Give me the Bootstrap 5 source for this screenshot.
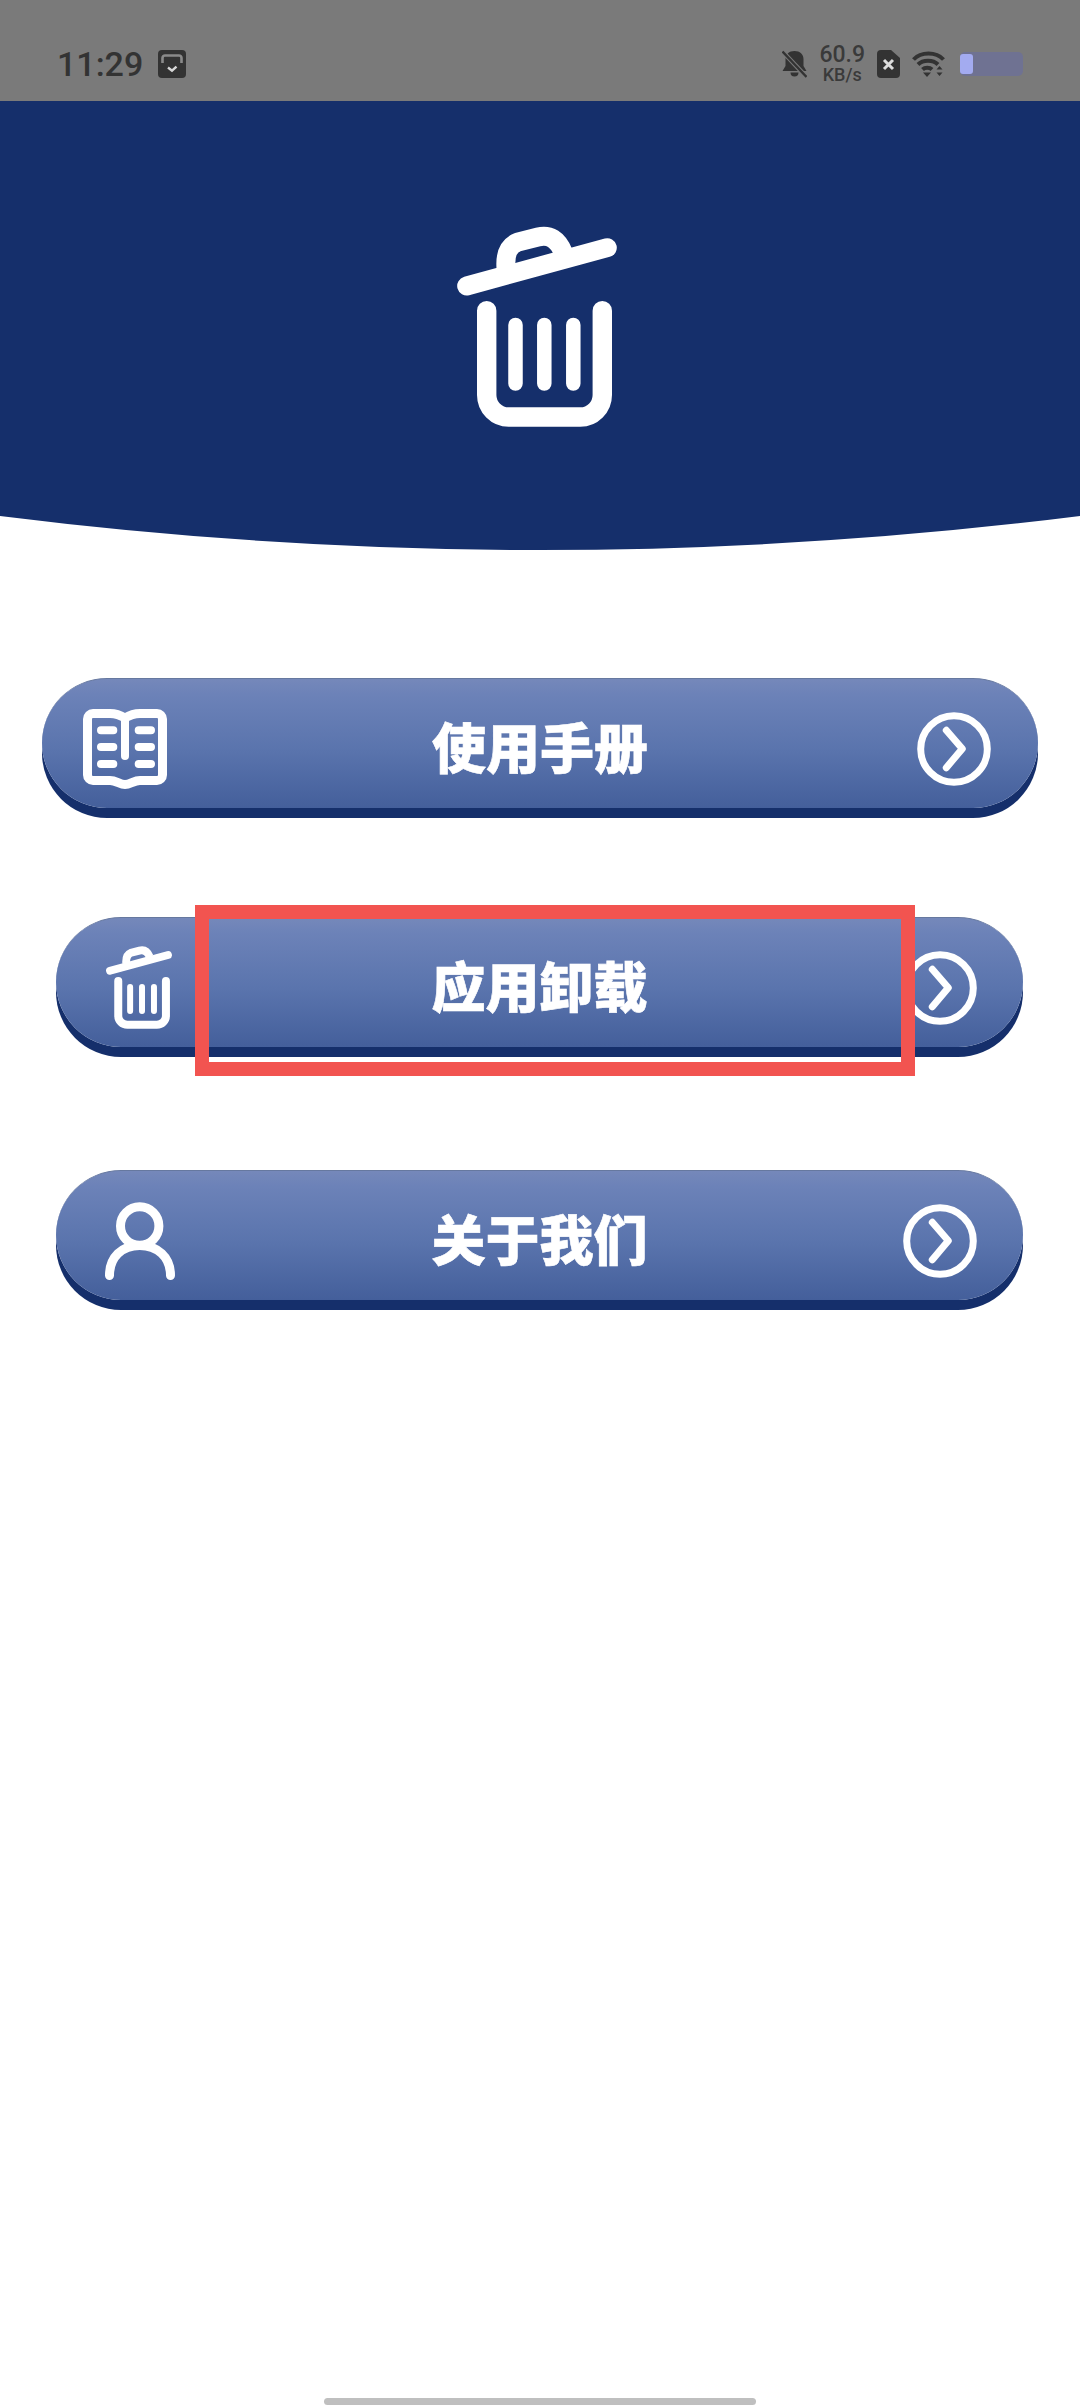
<!DOCTYPE html>
<html lang="zh-CN">
<head>
  <meta charset="UTF-8">
  <title>应用卸载</title>
  <link href="https://cdn.jsdelivr.net/npm/bootstrap@5.3.3/dist/css/bootstrap.min.css" rel="stylesheet">
  <style>
    body { font-family: "Noto Sans CJK SC", "Noto Sans", sans-serif; background: #fff; }
    .status-strip { height: 101px; padding: 26px 57px 0; background: #7a7a7a; color: #333; font-family: Roboto, "Noto Sans", sans-serif; }
    .clock { width: 85px; font-size: 34px; font-weight: 500; line-height: 1; white-space: nowrap; margin-right: 16px; }
    .speed { line-height: 1; text-align: center; font-weight: 500; color: #3a3a3a; }
    .speed-num { font-size: 23px; }
    .speed-unit { font-size: 18px; }
    .status-right { gap: 12px; }
    .wifi-icon { margin-right: 3px; }
    .hero { height: 415px; padding-top: 125px; background: #152f6b; }
    .hero-trash { width: 160px; height: 201px; margin-right: 6px; }
    .hero-curve { width: 100%; height: 34px; }
    .menu-list { padding-top: 128px; }
    .menu-row { height: 130px; padding-top: 10px; grid-template-columns: 1fr auto 1fr; font-size: 54px; font-weight: 900; line-height: 1; -webkit-text-stroke: .6px #fff; background: linear-gradient(#7588ba 0, #6c82b8 12%, #5a74ad 55%, #445f9b 100%); border-top: 1px solid #66789f; box-shadow: 0 10px 0 #152f6b; }
    .menu-label { padding-bottom: 5px; }
    .menu-first { margin: 0 42px 109px; padding-left: 47px; padding-right: 47px; }
    .menu-second { margin: 0 57px 123px 56px; padding-left: 46px; padding-right: 46px; }
    .menu-third { margin: 0 57px 0 56px; padding-left: 46px; padding-right: 46px; }
    .chevron-ring { width: 74px; height: 74px; justify-self: end; }
    .icon-book { width: 84px; height: 80px; margin-left: -6px; }
    .icon-trash { width: 66px; height: 83px; margin-left: 4px; }
    .icon-user { width: 70px; height: 78px; margin-left: 3px; }
    .red-frame { left: 195px; top: -12px; width: 720px; height: 171px; border: 14px solid #f25450; }
    .home-bar { width: 432px; height: 7px; margin-bottom: 3px; background: #bfbfbf; }
  </style>
</head>
<body>
  <svg width="0" height="0" class="position-absolute">
    <symbol id="trash" viewBox="37 26 160 201">
      <g fill="none" stroke="#fff" stroke-linecap="round">
        <path stroke-width="19.4" d="M66.7 110.7V195a22 22 0 0 0 22 22h71.6a22 22 0 0 0 22-22v-84.3"/>
        <path stroke-width="14.5" d="M95.5 125v58.5M124.3 125v58.5M153.3 125v58.5"/>
        <path stroke-width="19" d="M46.7 86 187.3 47.7"/>
        <path stroke-width="19" stroke-linecap="butt" d="M86 68C85 54 88 46 98 42l20-5c12-3 20 3 25 15"/>
      </g>
    </symbol>
    <symbol id="chevron" viewBox="0 0 74 74">
      <circle cx="37" cy="37" r="33.3" fill="none" stroke="#fff" stroke-width="7"/>
      <path d="M29.3 18.3 45.3 36.7 29.3 55.7" fill="none" stroke="#fff" stroke-width="7" stroke-linecap="round" stroke-linejoin="round"/>
    </symbol>
  </svg>

  <div class="d-flex flex-column min-vh-100">
    <!-- Barra de estado -->
    <div class="status-strip d-flex align-items-center justify-content-between">
      <div class="d-flex align-items-center">
        <span class="clock">11:29</span>
        <svg width="28" height="28" viewBox="0 0 28 28">
          <rect width="28" height="28" rx="4" fill="#333"/>
          <path d="M4.500 13V8A2.500 2.500 0 0 1 7 5.500h14A2.500 2.500 0 0 1 23.500 8v5" fill="none" stroke="#8a8a8a" stroke-width="2.600"/>
          <path d="M10 17.500l4 3.200 4.500-4" fill="none" stroke="#d8d8d8" stroke-width="2.400"/>
        </svg>
      </div>
      <div class="status-right d-flex align-items-center">
        <svg width="25" height="28" viewBox="0 0 25 28">
          <path d="M12.500 1c5.500 0 9 3.500 9 8v7l3 5H.5l3-5V9c0-4.500 3.500-8 9-8zM8.500 22.500h8a4 4 0 0 1-8 0z" fill="#333"/>
          <path d="M.5 1.500 24.500 27" stroke="#7a7a7a" stroke-width="4.500"/>
          <path d="M.5 1.500 24.500 27" stroke="#333" stroke-width="2.400"/>
        </svg>
        <div class="speed">
          <div class="speed-num">60.9</div>
          <div class="speed-unit">KB/s</div>
        </div>
        <svg width="23" height="28" viewBox="0 0 23 28">
          <path d="M4 0h10l9 8v16a4 4 0 0 1-4 4H4a4 4 0 0 1-4-4V4a4 4 0 0 1 4-4z" fill="#333"/>
          <path d="M7 10l9 9M16 10l-9 9" stroke="#ddd" stroke-width="3"/>
        </svg>
        <svg class="wifi-icon" width="33" height="26" viewBox="0 0 33 26">
          <g fill="none" stroke="#333" stroke-width="4">
            <path d="M1.500 8.500C9 .5 24 .5 31.500 8.500"/>
            <path d="M6 13.500c5-5 15-5 20 0"/>
            <path d="M10.500 18.500c2.500-2.500 7-2.500 9.500 0"/>
          </g>
          <path d="M11 21.500h8l-4 4.500zM27.500 15l3 3.500h-6zM27.500 25l3-3.500h-6z" fill="#333"/>
        </svg>
        <svg width="63" height="24" viewBox="0 0 63 24">
          <rect width="63" height="24" rx="5" fill="#6f7292"/>
          <rect y="2" width="13" height="20" rx="3" fill="#a3abf0"/>
        </svg>
      </div>
    </div>

    <!-- Cabecera -->
    <div class="hero d-flex justify-content-center align-items-start">
      <svg class="hero-trash"><use href="#trash"/></svg>
    </div>
    <svg class="hero-curve d-block" viewBox="0 0 1080 34" preserveAspectRatio="none">
      <path d="M0 0H1080Q540 68 0 0Z" fill="#152f6b"/>
    </svg>

    <!-- Menu -->
    <div class="menu-list">
      <a href="#" class="menu-row menu-first d-grid align-items-center text-white text-decoration-none rounded-pill">
        <svg class="icon-book" viewBox="0 0 84 80">
          <g fill="none" stroke="#fff" stroke-linecap="round">
            <path stroke-width="9" stroke-linejoin="round" d="M42 9C38 6.500 33 4.500 27 4.500H10A5.500 5.500 0 0 0 4.500 10v56A5.500 5.500 0 0 0 10 71.500h17c6 0 10 4 15 4s9-4 15-4h17a5.500 5.500 0 0 0 5.500-5.500V10A5.500 5.500 0 0 0 74 4.500H57C51 4.500 46 6.500 42 9z"/>
            <path stroke-width="8" d="M42 10v37"/>
            <path stroke-width="8" d="M18 21.300h12.300M18 38h12.300M18 55h12.300M55.700 21.300H68M55.700 38H68M55.700 55H68"/>
          </g>
        </svg>
        <span class="menu-label">使用手册</span>
        <svg class="chevron-ring"><use href="#chevron"/></svg>
      </a>

      <div class="position-relative">
        <a href="#" class="menu-row menu-second d-grid align-items-center text-white text-decoration-none rounded-pill">
          <svg class="icon-trash"><use href="#trash"/></svg>
          <span class="menu-label">应用卸载</span>
          <svg class="chevron-ring"><use href="#chevron"/></svg>
        </a>
        <div class="red-frame position-absolute"></div>
      </div>

      <a href="#" class="menu-row menu-third d-grid align-items-center text-white text-decoration-none rounded-pill">
        <svg class="icon-user" viewBox="0 0 70 78">
          <g fill="none" stroke="#fff" stroke-width="9" stroke-linecap="round">
            <circle cx="34.700" cy="24" r="19.200"/>
            <path d="M4.500 73.500C4.500 55 17 43.500 34.700 43.500S65.500 55 65.500 73.500"/>
          </g>
        </svg>
        <span class="menu-label">关于我们</span>
        <svg class="chevron-ring"><use href="#chevron"/></svg>
      </a>
    </div>

    <div class="home-bar rounded-pill mt-auto mx-auto"></div>
  </div>

  <script src="https://cdn.jsdelivr.net/npm/bootstrap@5.3.3/dist/js/bootstrap.bundle.min.js"></script>
</body>
</html>
